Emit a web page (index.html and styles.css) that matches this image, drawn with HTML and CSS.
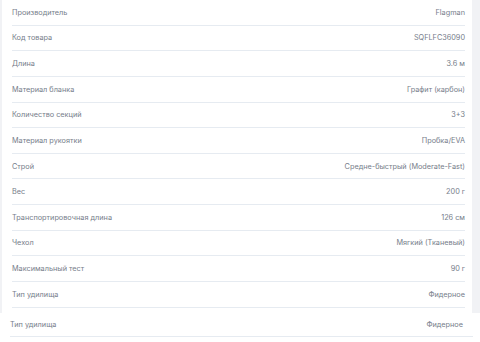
FILE: index.html
```html
<!DOCTYPE html>
<html lang="ru">
<head>
<meta charset="utf-8">
<link rel="stylesheet" href="styles.css">
</head>
<body>
<div class="frame">
  <div class="card">
    <div class="row"><span class="label">Производитель</span><span class="value">Flagman</span></div>
    <div class="row"><span class="label">Код товара</span><span class="value">SQFLFC36090</span></div>
    <div class="row"><span class="label">Длина</span><span class="value">3.6 м</span></div>
    <div class="row"><span class="label">Материал бланка</span><span class="value">Графит (карбон)</span></div>
    <div class="row"><span class="label">Количество секций</span><span class="value">3+3</span></div>
    <div class="row"><span class="label">Материал рукоятки</span><span class="value">Пробка/EVA</span></div>
    <div class="row"><span class="label">Строй</span><span class="value">Средне-быстрый (Moderate-Fast)</span></div>
    <div class="row"><span class="label">Вес</span><span class="value">200 г</span></div>
    <div class="row"><span class="label">Транспортировочная длина</span><span class="value">126 см</span></div>
    <div class="row"><span class="label">Чехол</span><span class="value">Мягкий (Тканевый)</span></div>
    <div class="row"><span class="label">Максимальный тест</span><span class="value">90 г</span></div>
    <div class="row"><span class="label">Тип удилища</span><span class="value">Фидерное</span></div>
  </div>
</div>
<div class="extra">
  <div class="row row-extra"><span class="label">Тип удилища</span><span class="value value-extra">Фидерное</span></div>
</div>
</body>
</html>
```

FILE: styles.css
```css
html, body {
  margin: 0;
  padding: 0;
  background: #ffffff;
  font-family: Inter, "Liberation Sans", sans-serif;
}
.frame {
  background: #f1f2f5;
  padding: 0 8px 0 2px;
}
.card {
  background: #ffffff;
  padding: 0 7px 5px 10px;
}
.row {
  box-sizing: border-box;
  height: 25.64px;
  display: flex;
  justify-content: space-between;
  align-items: center;
  border-bottom: 1px solid #e6ebf1;
  font-size: 7.3px;
  color: #767d8a;
}
.extra {
  padding: 0 7px 0 10px;
}
.row-extra {
  height: 24px;
}
.value-extra {
  padding-right: 10px;
}
```
